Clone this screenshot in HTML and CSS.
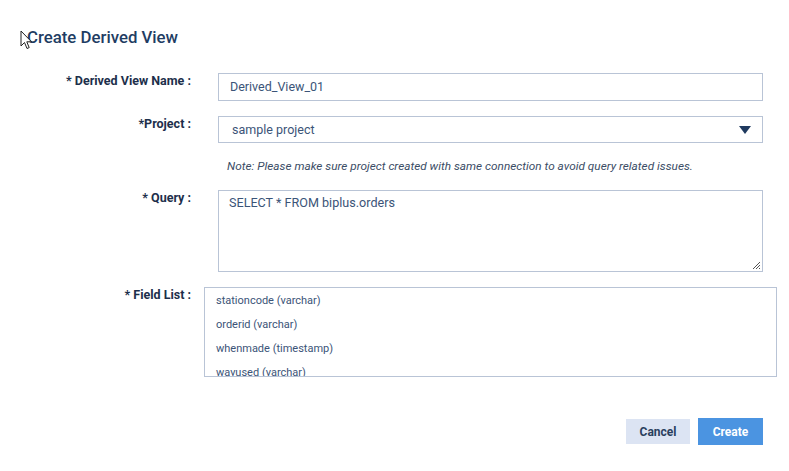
FILE: index.html
```html
<!DOCTYPE html>
<html>
<head>
<meta charset="utf-8">
<link rel="stylesheet" href="styles.css">
</head>
<body>
<div class="dialog">
  <h1 class="title">Create Derived View</h1>
  <div class="form">
    <label class="lbl lbl-name">* Derived View Name :</label>
    <div class="field"><div class="input">Derived_View_01</div></div>

    <label class="lbl lbl-project">*Project :</label>
    <div class="field">
      <div class="select"><span>sample project</span>
        <svg class="caret" width="12" height="8" viewBox="0 0 12 8"><path d="M0 0H12L6 8Z" fill="#1f3a5f"/></svg>
      </div>
      <p class="note">Note: Please make sure project created with same connection to avoid query related issues.</p>
    </div>

    <label class="lbl lbl-query">* Query :</label>
    <div class="field">
      <div class="textarea">SELECT * FROM biplus.orders
        <svg class="grip" width="9" height="9" viewBox="0 0 9 9"><path d="M8 1L1 8M8 4L4 8M8 7L7 8" stroke="#555" stroke-width="1"/></svg>
      </div>
    </div>

    <label class="lbl lbl-fields">* Field List :</label>
    <div class="field">
      <ul class="fieldlist">
        <li>stationcode (varchar)</li>
        <li>orderid (varchar)</li>
        <li>whenmade (timestamp)</li>
        <li>wayused (varchar)</li>
      </ul>
    </div>
  </div>
  <div class="actions">
    <button class="btn btn-cancel">Cancel</button>
    <button class="btn btn-create">Create</button>
  </div>
</div>
<svg class="cursor" width="13" height="20" viewBox="0 0 13 20"><path d="M1 1V16L4.5 12.5L7 18.5L9.2 17.6L6.8 11.8H11.5Z" fill="#fff" stroke="#222" stroke-width="1" stroke-linejoin="miter"/></svg>
</body>
</html>
```
FILE: styles.css
```css
* { box-sizing: border-box; }
html, body { margin: 0; padding: 0; background: #fff; }
body {
  font-family: Roboto, "Liberation Sans", Arial, sans-serif;
  width: 789px;
  height: 471px;
  overflow: hidden;
  position: relative;
}
.dialog { padding: 27px 26px 0 27px; }
.title {
  margin: 0;
  font-size: 16.8px;
  font-weight: 500;
  color: #1f3d63;
  line-height: 20px;
}
.form {
  display: grid;
  grid-template-columns: 164px 545px;
  column-gap: 27px;
  margin-top: 26px;
}
.lbl {
  text-align: right;
  font-size: 12.5px;
  font-weight: 700;
  color: #1d2f4b;
  line-height: 14px;
  padding-top: 1px;
}
.field { min-width: 0; }
.input, .select, .textarea {
  border: 1px solid #b9c4d6;
  font-size: 12.5px;
  color: #3b5478;
  background: #fff;
}
.input { height: 28px; line-height: 26px; padding-left: 11px; margin-bottom: 15px; }
.select {
  height: 27px;
  display: flex;
  align-items: center;
  justify-content: space-between;
  padding: 0 11px 0 13px;
}
.caret { display: block; margin-top: 1px; }
.note {
  margin: 16px 0 0 9px;
  font-size: 11.8px;
  font-style: italic;
  color: #3b4d66;
  line-height: 14px;
  height: 31px;
}
.textarea {
  height: 82px;
  padding: 5px 10px;
  font-size: 12.6px;
  line-height: 14px;
  position: relative;
  margin-bottom: 15px;
}
.grip { position: absolute; right: 1px; bottom: 1px; }
.fieldlist {
  list-style: none;
  margin: 0 -14px 0 -14px;
  padding: 1px 0 0 11px;
  height: 90px;
  border: 1px solid #b9c4d6;
  overflow: hidden;
  font-size: 11px;
  color: #3b5478;
}
.fieldlist li { line-height: 24px; height: 24px; }
.actions {
  display: flex;
  justify-content: flex-end;
  align-items: center;
  gap: 8px;
  margin-top: 41px;
  padding-right: 0;
}
.btn {
  border: none;
  font-family: Roboto, "Liberation Sans", Arial, sans-serif;
  font-size: 12px;
  font-weight: 700;
  cursor: pointer;
}
.btn-cancel { width: 64px; height: 25px; background: #dce4f3; color: #2a3f5e; }
.btn-create { width: 65px; height: 27px; background: #4b94e1; color: #fff; }
.cursor { position: absolute; left: 20px; top: 30px; }
```
